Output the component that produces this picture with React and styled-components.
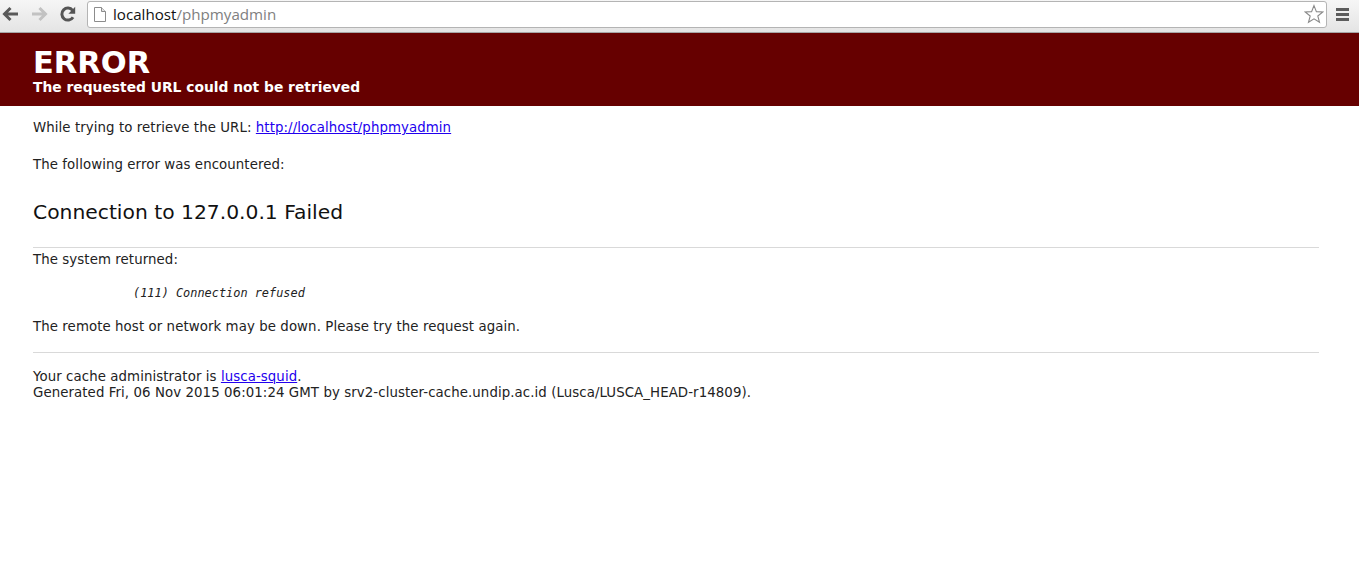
import React from "react";
import styled, { createGlobalStyle } from "styled-components";

const GlobalStyle = createGlobalStyle`
    html, body {
        margin: 0;
        padding: 0;
        background: #fff;
    }
    body {
        font-family: "DejaVu Sans", Verdana, sans-serif;
        overflow: hidden;
    }
`;

const Page = styled.div`
    width: 1359px;
    height: 565px;
`;

const Toolbar = styled.div`
    height: 31px;
    display: flex;
    align-items: flex-start;
    padding-top: 1px;
    background: linear-gradient(#f6f6f6, #e4e4e4);
    border-bottom: 1px solid #a6a6a6;
`;

const NavButton = styled.div`
    width: ${(props) => props.$width}px;
    height: 26px;
    display: flex;
    align-items: center;
    justify-content: center;
    flex-shrink: 0;
`;

const AddressBar = styled.div`
    width: 1240px;
    height: 27px;
    box-sizing: border-box;
    margin-left: 7px;
    display: flex;
    align-items: center;
    padding: 0 2px 1px 6px;
    background: #fff;
    border: 1px solid #b4b4b4;
    border-radius: 3px;
    font-family: "Open Sans", "Noto Sans", sans-serif;
    font-size: 15.15px;
`;

const Host = styled.span`
    color: #111;
`;

const Path = styled.span`
    color: #808080;
`;

const PageIcon = styled.svg`
    margin-right: 7px;
    flex-shrink: 0;
`;

const Address = styled.div`
    flex: 1;
`;

const Banner = styled.div`
    height: 73px;
    box-sizing: border-box;
    padding: 14px 33px 0;
    background: #660000;
    color: #fff;
`;

const Title = styled.h1`
    margin: 0;
    font-size: 30.5px;
    line-height: 32px;
    font-weight: bold;
`;

const Subtitle = styled.h2`
    margin: 0;
    font-size: 13.83px;
    line-height: 17px;
    font-weight: bold;
`;

const Main = styled.div`
    padding: 14px 40px 0 33px;
    color: #222;
    font-size: 13.33px;
    letter-spacing: 0.08px;
    line-height: 16px;
`;

const Text = styled.p`
    margin: ${(props) => props.$margin || "0"};
`;

const Link = styled.a`
    color: #2200ee;
    text-decoration: underline;
`;

const Heading = styled.div`
    margin: 27px 0 0;
    font-size: 20.3px;
    letter-spacing: 0;
    line-height: 24px;
    color: #111;
`;

const Rule = styled.hr`
    margin: ${(props) => props.$margin};
    border: none;
    height: 1px;
    background: #d9d9d9;
`;

const Detail = styled.p`
    margin: 18px 0 0 100px;
    font-family: "DejaVu Sans Mono", monospace;
    font-size: 11.9px;
    letter-spacing: 0;
    line-height: 14px;
    font-style: italic;
`;

const BackIcon = ({ color }) => (
    <svg width="18" height="18" viewBox="0 0 18 18">
        <path d="M2 9 H16 M8.5 3 L2.5 9 L8.5 15" fill="none" stroke={color} strokeWidth="3" />
    </svg>
);

const ForwardIcon = ({ color }) => (
    <svg width="18" height="18" viewBox="0 0 18 18">
        <path d="M16 9 H2 M9.5 3 L15.5 9 L9.5 15" fill="none" stroke={color} strokeWidth="3" />
    </svg>
);

const ReloadIcon = () => (
    <svg width="18" height="18" viewBox="0 0 18 18">
        <path d="M14 12.2 A6 6 0 1 1 13.6 5.4" fill="none" stroke="#555" strokeWidth="3" />
        <path d="M16.2 1.8 L16.2 8.8 L9.4 8.8 Z" fill="#555" />
    </svg>
);

const StarIcon = () => (
    <svg width="20" height="20" viewBox="0 0 20 20">
        <path
            d="M10 1.6 L12.4 7.6 L18.8 8 L13.8 12 L15.5 18.3 L10 14.8 L4.5 18.3 L6.2 12 L1.2 8 L7.6 7.6 Z"
            fill="#fff"
            stroke="#8a8a8a"
            strokeWidth="1.1"
        />
    </svg>
);

const MenuIcon = () => (
    <svg width="14" height="14" viewBox="0 0 14 14">
        <rect x="0" y="1" width="13" height="3" fill="#5c5c5c" />
        <rect x="0" y="6" width="13" height="3" fill="#5c5c5c" />
        <rect x="0" y="11" width="13" height="3" fill="#5c5c5c" />
    </svg>
);

const App = () => {
    return (
        <Page>
            <GlobalStyle />
            <Toolbar>
                <NavButton $width={22}><BackIcon color="#5a5a5a" /></NavButton>
                <NavButton $width={34}><ForwardIcon color="#c2c2c2" /></NavButton>
                <NavButton $width={24}><ReloadIcon /></NavButton>
                <AddressBar>
                    <PageIcon width="12" height="15" viewBox="0 0 12 15">
                        <path d="M0.5 0.5 H7.5 L11.5 4.5 V14.5 H0.5 Z" fill="#fff" stroke="#8c8c8c" />
                        <path d="M7.5 0.5 V4.5 H11.5" fill="#e4e4e4" stroke="#8c8c8c" />
                    </PageIcon>
                    <Address>
                        <Host>localhost</Host>
                        <Path>/phpmyadmin</Path>
                    </Address>
                    <StarIcon />
                </AddressBar>
                <NavButton $width={32}><MenuIcon /></NavButton>
            </Toolbar>
            <Banner>
                <Title>ERROR</Title>
                <Subtitle>The requested URL could not be retrieved</Subtitle>
            </Banner>
            <Main>
                <Text>
                    While trying to retrieve the URL: <Link href="#">http://localhost/phpmyadmin</Link>
                </Text>
                <Text $margin="21px 0 0">The following error was encountered:</Text>
                <Heading>Connection to 127.0.0.1 Failed</Heading>
                <Rule $margin="23px 0 0" />
                <Text $margin="4px 0 0">The system returned:</Text>
                <Detail>(111) Connection refused</Detail>
                <Text $margin="19px 0 0">The remote host or network may be down. Please try the request again.</Text>
                <Rule $margin="17px 0 0" />
                <Text $margin="16px 0 0">
                    Your cache administrator is <Link href="#">lusca-squid</Link>.
                    <br />
                    Generated Fri, 06 Nov 2015 06:01:24 GMT by srv2-cluster-cache.undip.ac.id (Lusca/LUSCA_HEAD-r14809).
                </Text>
            </Main>
        </Page>
    );
};

export default App;
